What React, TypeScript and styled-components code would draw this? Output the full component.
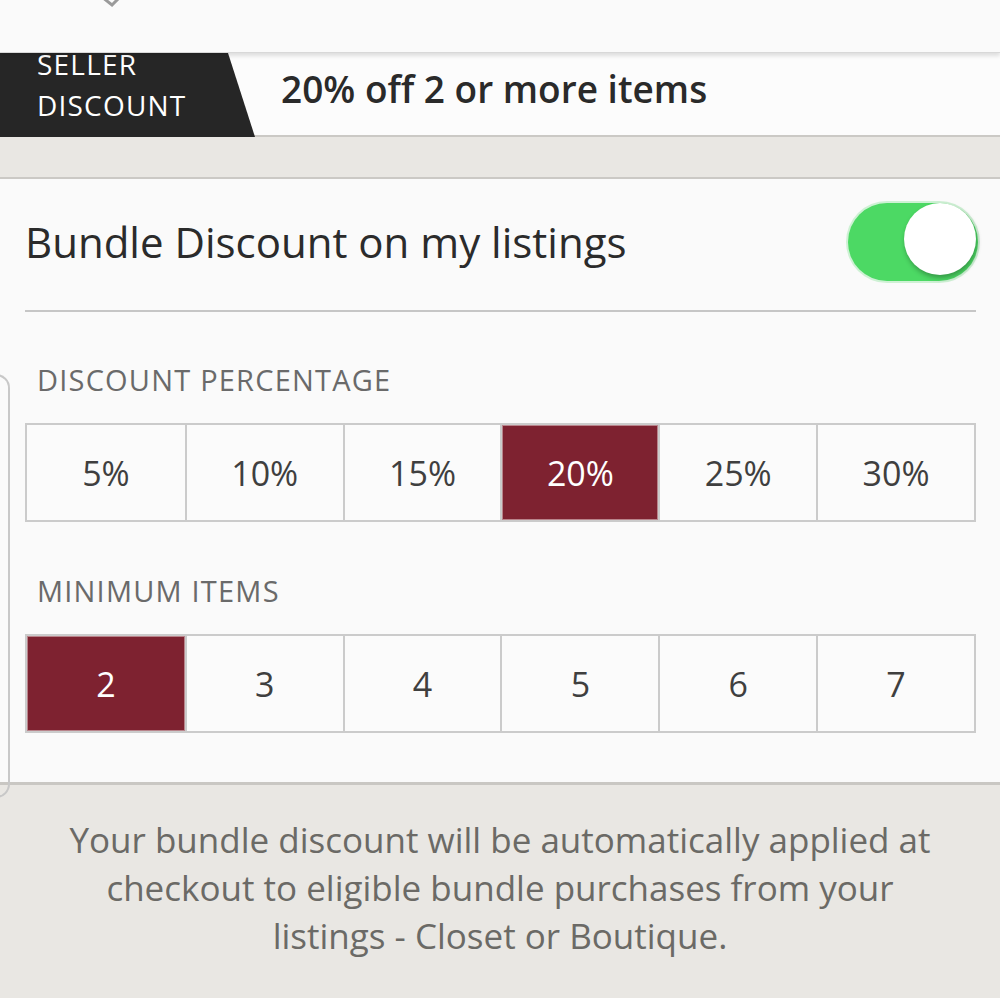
import styled, { createGlobalStyle } from "styled-components";

const GlobalStyle = createGlobalStyle`
  html, body {
    margin: 0;
    padding: 0;
    background: #e9e7e3;
  }
  body {
    font-family: "Open Sans", Lato, "Liberation Sans", sans-serif;
  }
`;

const percentages = ["5%", "10%", "15%", "20%", "25%", "30%"];
const minimums = ["2", "3", "4", "5", "6", "7"];

function OptionRow({ options, selected }: { options: string[]; selected: string }) {
  return (
    <OptionGrid>
      {options.map((option) => (
        <OptionCell key={option} $active={option === selected}>
          {option}
        </OptionCell>
      ))}
    </OptionGrid>
  );
}

function App(): React.ReactElement {
  return (
    <Page>
      <GlobalStyle />
      <TopBar>
        <BackIcon width="24" height="10" viewBox="0 0 24 10">
          <path d="M2 0 L12 8 L20 0" fill="none" stroke="#9a9a9a" strokeWidth="3" />
        </BackIcon>
      </TopBar>
      <SellerRow>
        <Tag>
          <span>SELLER</span>
          <span>DISCOUNT</span>
        </Tag>
        <Headline>20% off 2 or more items</Headline>
      </SellerRow>
      <Band />
      <Card>
        <EdgeHandle />
        <ToggleRow>
          <ToggleLabel>Bundle Discount on my listings</ToggleLabel>
          <Switch $on>
            <Knob />
          </Switch>
        </ToggleRow>
        <Divider />
        <SectionLabel>DISCOUNT PERCENTAGE</SectionLabel>
        <OptionRow options={percentages} selected="20%" />
        <SectionLabel>MINIMUM ITEMS</SectionLabel>
        <OptionRow options={minimums} selected="2" />
      </Card>
      <Footer>
        Your bundle discount will be automatically applied at
        <br />
        checkout to eligible bundle purchases from your
        <br />
        listings - Closet or Boutique.
      </Footer>
    </Page>
  );
}

const Page = styled.div`
  width: 1000px;
  height: 998px;
  overflow: hidden;
  background: #e9e7e3;
`;

const TopBar = styled.header`
  position: relative;
  z-index: 2;
  height: 55px;
  padding-left: 100px;
  background: #fafafa;
  border-bottom: 1px solid #d8d8d8;
  box-shadow: 0 3px 4px rgba(0, 0, 0, 0.12);
`;

const BackIcon = styled.svg`
  display: block;
  margin-top: -3px;
`;

const SellerRow = styled.div`
  display: flex;
  align-items: center;
  height: 82px;
  background: #fcfcfc;
  border-bottom: 2px solid #cbc9c5;
`;

const Tag = styled.div`
  display: flex;
  flex-direction: column;
  justify-content: flex-end;
  width: 255px;
  height: 84px;
  margin-bottom: -2px;
  padding: 0 0 11px 37px;
  box-sizing: border-box;
  overflow: hidden;
  background: #262626;
  clip-path: polygon(0 0, 228px 0, 255px 100%, 0 100%);
  color: #ffffff;
  font-size: 28px;
  line-height: 41px;
  letter-spacing: 1.2px;
`;

const Headline = styled.div`
  margin: 0 0 12px 26px;
  font-size: 37px;
  font-weight: 600;
  color: #2a2a2a;
`;

const Band = styled.div`
  height: 40px;
  background: #e9e7e3;
  border-bottom: 2px solid #cbc9c5;
`;

const Card = styled.section`
  position: relative;
  padding: 0 24px 49px 25px;
  background: #fafafa;
  border-bottom: 3px solid #c9c7c3;
`;

const EdgeHandle = styled.div`
  position: absolute;
  left: -4px;
  top: 195px;
  width: 12px;
  height: 420px;
  border: 2px solid #c8c8c8;
  border-left: none;
  border-radius: 0 14px 14px 0;
`;

const ToggleRow = styled.div`
  display: flex;
  align-items: center;
  justify-content: space-between;
  height: 131px;
  padding-bottom: 6px;
  box-sizing: border-box;
`;

const ToggleLabel = styled.div`
  font-size: 42px;
  color: #2b2b2b;
`;

const Switch = styled.div<{ $on?: boolean }>`
  display: flex;
  justify-content: ${({ $on }) => ($on ? "flex-end" : "flex-start")};
  align-items: flex-start;
  width: 130px;
  height: 78px;
  margin-right: -2px;
  border-radius: 39px;
  background: ${({ $on }) => ($on ? "#4cd964" : "#e5e5e5")};
  box-shadow: 0 0 0 2px rgba(76, 217, 100, 0.25);
`;

const Knob = styled.div`
  width: 72px;
  height: 72px;
  margin-right: 2px;
  border-radius: 50%;
  background: #ffffff;
  box-shadow: 1px 3px 5px rgba(0, 0, 0, 0.3);
`;

const Divider = styled.hr`
  margin: 0;
  border: none;
  height: 2px;
  background: #c6c6c6;
`;

const SectionLabel = styled.div`
  padding: 51px 0 26px 12px;
  font-size: 29px;
  line-height: 34px;
  color: #6a6a6a;
  letter-spacing: 1.2px;

  & + div + & {
    padding-top: 52px;
  }
`;

const OptionGrid = styled.div`
  display: grid;
  grid-template-columns: repeat(6, 1fr);
  height: 99px;
  border: 2px solid #cbcbcb;
  box-sizing: border-box;
  background: #fbfbfb;
`;

const OptionCell = styled.div<{ $active?: boolean }>`
  display: flex;
  align-items: center;
  justify-content: center;
  border-left: 2px solid #cbcbcb;
  font-size: 34px;
  color: ${({ $active }) => ($active ? "#ffffff" : "#3f3f3f")};
  background: ${({ $active }) => ($active ? "#7e2230" : "transparent")};
  box-shadow: ${({ $active }) => ($active ? "inset 0 0 0 1px #b9848b" : "none")};

  &:first-child {
    border-left: none;
  }
`;

const Footer = styled.p`
  margin: 0;
  padding-top: 31px;
  text-align: center;
  font-size: 35px;
  line-height: 48px;
  color: #6b6a66;
`;

export default App;
